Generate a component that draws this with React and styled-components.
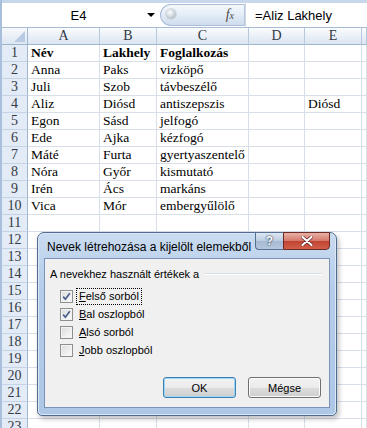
import styled, { createGlobalStyle } from 'styled-components';

const GlobalStyle = createGlobalStyle`
  html, body {
    margin: 0;
    padding: 0;
    background: #ffffff;
    overflow: hidden;
  }
`;

const columns = ['A', 'B', 'C', 'D', 'E', ''];

const data = [
  ['Név', 'Lakhely', 'Foglalkozás', '', ''],
  ['Anna', 'Paks', 'vizköpő', '', ''],
  ['Juli', 'Szob', 'távbeszélő', '', ''],
  ['Aliz', 'Diósd', 'antiszepszis', '', 'Diósd'],
  ['Egon', 'Sásd', 'jelfogó', '', ''],
  ['Ede', 'Ajka', 'kézfogó', '', ''],
  ['Máté', 'Furta', 'gyertyaszentelő', '', ''],
  ['Nóra', 'Győr', 'kismutató', '', ''],
  ['Irén', 'Ács', 'markáns', '', ''],
  ['Vica', 'Mór', 'embergyűlölő', '', ''],
];

const ROW_COUNT = 23;

const options = [
  { key: 'F', rest: 'első sorból', checked: true, focused: true },
  { key: 'B', rest: 'al oszlopból', checked: true },
  { key: 'A', rest: 'lsó sorból', checked: false },
  { key: 'J', rest: 'obb oszlopból', checked: false },
];

const App = () => {
  const rows = [];
  for (let r = 1; r <= ROW_COUNT; r++) {
    const values = data[r - 1] || [];
    rows.push(
      <RowHead key={`h${r}`}>{r}</RowHead>,
      ...columns.map((c, i) => (
        <Cell key={`${r}-${i}`} $bold={r === 1}>
          {values[i] || ''}
        </Cell>
      ))
    );
  }

  return (
    <>
      <GlobalStyle />
      <Window>
        <FormulaBar>
          <NameBox>
            <NameText>E4</NameText>
            <NameArrow />
          </NameBox>
          <FxPill>
            <PillKnob />
            <FxLabel>
              f<sub>x</sub>
            </FxLabel>
          </FxPill>
          <FormulaInput>=Aliz Lakhely</FormulaInput>
        </FormulaBar>

        <Sheet>
          <Corner />
          {columns.map((c, i) => (
            <ColHead key={c + i}>{c}</ColHead>
          ))}
          {rows}
        </Sheet>

        <Dialog>
          <TitleBar>
            <TitleText>Nevek létrehozása a kijelölt elemekből</TitleText>
            <TitleButtons>
              <HelpButton>?</HelpButton>
              <CloseButton>
                <svg width="12" height="10" viewBox="0 0 12 10">
                  <path
                    d="M1.5 1 L10.5 9 M10.5 1 L1.5 9"
                    stroke="#5a2020"
                    strokeWidth="3.4"
                    strokeLinecap="round"
                  />
                  <path
                    d="M1.5 1 L10.5 9 M10.5 1 L1.5 9"
                    stroke="#ffffff"
                    strokeWidth="2.2"
                    strokeLinecap="round"
                  />
                </svg>
              </CloseButton>
            </TitleButtons>
          </TitleBar>
          <Panel>
            <GroupHeader>
              <span>A nevekhez használt értékek a</span>
              <GroupLine />
            </GroupHeader>
            <CheckList>
              {options.map((o) => (
                <CheckRow key={o.key}>
                  <CheckBox>
                    {o.checked && (
                      <svg width="9" height="9" viewBox="0 0 9 9">
                        <path
                          d="M1.2 4.6 L3.4 7.2 L7.8 1.2"
                          fill="none"
                          stroke="#4a5e8c"
                          strokeWidth="1.7"
                        />
                      </svg>
                    )}
                  </CheckBox>
                  <CheckLabel $focused={o.focused}>
                    <u>{o.key}</u>
                    {o.rest}
                  </CheckLabel>
                </CheckRow>
              ))}
            </CheckList>
            <ButtonRow>
              <DialogButton $primary>OK</DialogButton>
              <DialogButton>Mégse</DialogButton>
            </ButtonRow>
          </Panel>
        </Dialog>
      </Window>
    </>
  );
};

const Window = styled.div`
  position: relative;
  width: 367px;
  height: 428px;
  overflow: hidden;
  border-left: 2px solid #a9c0dc;
  box-sizing: border-box;
  background: #ffffff;
`;

// formula bar
const FormulaBar = styled.div`
  display: flex;
  height: 28px;
  box-sizing: border-box;
  border-top: 3px solid #c8d8ec;
  border-bottom: 1px solid #a6bbd6;
  background: #ffffff;
`;
const NameBox = styled.div`
  width: 158px;
  display: flex;
  align-items: center;
  font-family: 'Liberation Sans', Arial, sans-serif;
  font-size: 13px;
  color: #000;
`;
const NameText = styled.span`
  flex: 1;
  text-align: center;
  padding-left: 8px;
`;
const NameArrow = styled.span`
  width: 0;
  height: 0;
  margin-right: 5px;
  border-left: 4px solid transparent;
  border-right: 4px solid transparent;
  border-top: 4px solid #000;
`;
const FxPill = styled.div`
  width: 85px;
  margin: 1px 0;
  position: relative;
  display: flex;
  align-items: center;
  justify-content: flex-end;
  padding-right: 10px;
  box-sizing: border-box;
  border: 1px solid #a8bcd6;
  border-right: 1px solid #b7c6d8;
  border-radius: 12px 0 0 12px;
  background: linear-gradient(#f6f9fd, #e3ecf7 50%, #cfdcee);
`;
const PillKnob = styled.span`
  position: absolute;
  left: 5px;
  top: 4px;
  width: 10px;
  height: 10px;
  border-radius: 50%;
  background: radial-gradient(circle at 40% 35%, #ffffff, #b8c2cc 70%);
  box-shadow: 0 0 0 1px #d0d8e2;
`;
const FxLabel = styled.span`
  font-family: 'Liberation Serif', 'Times New Roman', serif;
  font-style: italic;
  font-size: 14px;
  color: #4a4a4a;
  sub {
    font-size: 10px;
    vertical-align: baseline;
  }
`;
const FormulaInput = styled.div`
  flex: 1;
  display: flex;
  align-items: center;
  padding-left: 9px;
  border-left: 1px solid #cfd9e5;
  font-family: 'Liberation Sans', Arial, sans-serif;
  font-size: 13px;
  color: #000;
`;

// sheet
const Sheet = styled.div`
  display: grid;
  grid-template-columns: 26px 72px 57px 92px 56px 57px 1fr;
  grid-auto-rows: 17px;
  font-family: 'Liberation Serif', 'Times New Roman', serif;
  font-size: 13.5px;
`;
const Corner = styled.div`
  position: relative;
  background: linear-gradient(#f7f9fc, #dde6f2);
  border-right: 1px solid #9eb6ce;
  border-bottom: 1px solid #9eb6ce;
  &::after {
    content: '';
    position: absolute;
    right: 2px;
    bottom: 2px;
    width: 0;
    height: 0;
    border-left: 11px solid transparent;
    border-bottom: 11px solid #b9cbe2;
  }
`;
const ColHead = styled.div`
  display: flex;
  align-items: center;
  justify-content: center;
  background: linear-gradient(#fbfcfe, #e9eff7 55%, #dce5f1);
  border-right: 1px solid #b8c9de;
  border-bottom: 1px solid #9eb6ce;
  color: #333a44;
  font-size: 14px;
  line-height: 16px;
`;
const RowHead = styled.div`
  display: flex;
  align-items: center;
  justify-content: center;
  background: #e3ebf6;
  border-right: 1px solid #9eb6ce;
  border-bottom: 1px solid #c4d3e6;
  color: #333a44;
  font-size: 14px;
  line-height: 16px;
`;
const Cell = styled.div`
  display: flex;
  align-items: center;
  padding-left: 3px;
  white-space: nowrap;
  overflow: visible;
  border-right: 1px solid #d8dfe9;
  border-bottom: 1px solid #d8dfe9;
  color: #000;
  font-weight: ${(p) => (p.$bold ? 700 : 400)};
  line-height: 16px;
`;

// dialog
const Dialog = styled.div`
  position: absolute;
  left: 35px;
  top: 232px;
  width: 300px;
  height: 184px;
  box-sizing: border-box;
  display: flex;
  flex-direction: column;
  padding: 0 6px 7px 6px;
  border: 1px solid #4f6b90;
  border-radius: 7px 7px 5px 5px;
  background: linear-gradient(#c9dbf0, #b6cdea 30%, #aec7e7);
  box-shadow: inset 0 0 0 1px #dce8f6, 2px 3px 5px rgba(0, 0, 0, 0.25);
`;
const TitleBar = styled.div`
  position: relative;
  height: 25px;
  display: flex;
  align-items: center;
  padding-left: 3px;
`;
const TitleText = styled.span`
  font-family: 'Liberation Sans', Arial, sans-serif;
  font-size: 12px;
  color: #000;
  margin-top: 3px;
`;
const TitleButtons = styled.div`
  position: absolute;
  top: -1px;
  right: 0;
  display: flex;
`;
const HelpButton = styled.div`
  width: 28px;
  height: 18px;
  display: flex;
  align-items: center;
  justify-content: center;
  box-sizing: border-box;
  border: 1px solid #56708f;
  border-right: none;
  border-radius: 0 0 0 4px;
  background: linear-gradient(#dfe8f3, #bccde1 48%, #a6b9d1 52%, #b4c7de);
  font-family: 'Liberation Sans', Arial, sans-serif;
  font-weight: 700;
  font-size: 12px;
  color: #ffffff;
  text-shadow: 0 0 2px #26374f, 0 0 1px #26374f;
`;
const CloseButton = styled.div`
  width: 47px;
  height: 18px;
  display: flex;
  align-items: center;
  justify-content: center;
  box-sizing: border-box;
  border: 1px solid #6b2a24;
  border-radius: 0 0 4px 0;
  background: linear-gradient(#e8b0a6, #d57a6c 48%, #c34333 52%, #d0604a);
`;
const Panel = styled.div`
  flex: 1;
  display: flex;
  flex-direction: column;
  border: 1px solid #7893b7;
  background: #f0f0f0;
  font-family: 'Liberation Sans', Arial, sans-serif;
  font-size: 11px;
  color: #000;
`;
const GroupHeader = styled.div`
  display: flex;
  align-items: center;
  gap: 5px;
  height: 14px;
  margin: 8px 7px 0 5px;
`;
const GroupLine = styled.div`
  flex: 1;
  height: 1px;
  background: #d5dfe5;
  border-bottom: 1px solid #ffffff;
`;
const CheckList = styled.div`
  display: flex;
  flex-direction: column;
  margin: 6px 0 0 15px;
`;
const CheckRow = styled.div`
  display: flex;
  align-items: center;
  height: 18px;
  gap: 3px;
`;
const CheckBox = styled.div`
  width: 13px;
  height: 13px;
  box-sizing: border-box;
  display: flex;
  align-items: center;
  justify-content: center;
  border: 1px solid #8e8f8f;
  background: linear-gradient(135deg, #d9dadb, #f6f6f6 80%);
  box-shadow: inset 0 0 0 1px #f4f4f4;
`;
const CheckLabel = styled.span`
  padding: 1px 2px;
  border: 1px dotted ${(p) => (p.$focused ? '#000' : 'transparent')};
  line-height: 13px;
`;
const ButtonRow = styled.div`
  margin-top: auto;
  display: flex;
  justify-content: flex-end;
  gap: 12px;
  padding: 0 8px 9px 0;
`;
const DialogButton = styled.div`
  width: 73px;
  height: 21px;
  box-sizing: border-box;
  display: flex;
  align-items: center;
  justify-content: center;
  border: 1px solid ${(p) => (p.$primary ? '#3c7fb1' : '#707070')};
  border-radius: 3px;
  background: linear-gradient(#f2f2f2, #ebebeb 50%, #dddddd 51%, #cfcfcf);
  box-shadow: inset 0 0 0 1px ${(p) => (p.$primary ? '#9ed8f4' : '#fbfbfb')};
`;

export default App;
